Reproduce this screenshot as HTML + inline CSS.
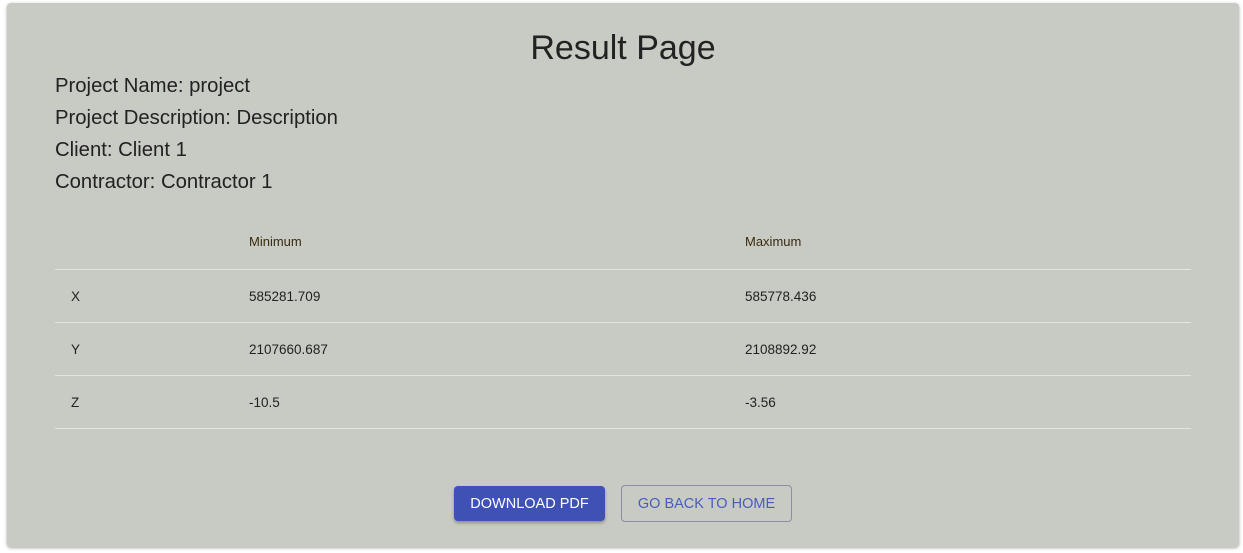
<!DOCTYPE html>
<html><head><style>
body{margin:0;background:#fff;font-family:"Liberation Sans",Arial,sans-serif;}
.card{position:absolute;left:7px;top:3px;width:1232px;height:544px;background:#c8cbc4;border-radius:4px;box-shadow:0 1px 3px rgba(0,0,0,.35);}
h1{position:absolute;left:0;width:100%;top:25px;margin:0;text-align:center;font-weight:400;font-size:34px;color:#222;line-height:40px;}
.l{position:absolute;left:48px;font-size:20.3px;color:#222;line-height:24px;}
.t{position:absolute;font-size:13.5px;color:#222;line-height:16px;}
.h{color:#3a2a10;font-size:13px}
.hr{position:absolute;left:48px;width:1136px;height:1px;background:#e2e4df;}
.b1{position:absolute;left:447px;top:483px;width:151px;height:35px;background:#3f51b5;color:#fff;border-radius:4px;box-shadow:0 2px 3px rgba(0,0,0,.3);font-size:14.5px;line-height:37px;text-align:center;}
.b2{position:absolute;left:614px;top:482px;width:169px;height:35px;border:1px solid #8a8fa0;color:#4a5bbd;border-radius:4px;font-size:14.5px;line-height:37px;text-align:center;}
</style></head><body>
<div class="card">
<h1>Result Page</h1>
<div class="l" style="top:71px">Project Name: project</div>
<div class="l" style="top:103px">Project Description: Description</div>
<div class="l" style="top:135px">Client: Client 1</div>
<div class="l" style="top:167px">Contractor: Contractor 1</div>
<div class="t h" style="left:242px;top:231px">Minimum</div>
<div class="t h" style="left:738px;top:231px">Maximum</div>
<div class="hr" style="top:266px"></div>
<div class="t" style="left:64px;top:286px">X</div><div class="t" style="left:242px;top:286px">585281.709</div><div class="t" style="left:738px;top:286px">585778.436</div>
<div class="hr" style="top:319px"></div>
<div class="t" style="left:64px;top:339px">Y</div><div class="t" style="left:242px;top:339px">2107660.687</div><div class="t" style="left:738px;top:339px">2108892.92</div>
<div class="hr" style="top:372px"></div>
<div class="t" style="left:64px;top:392px">Z</div><div class="t" style="left:242px;top:392px">-10.5</div><div class="t" style="left:738px;top:392px">-3.56</div>
<div class="hr" style="top:425px"></div>
<div class="b1">DOWNLOAD PDF</div>
<div class="b2">GO BACK TO HOME</div>
</div>
</body></html>
